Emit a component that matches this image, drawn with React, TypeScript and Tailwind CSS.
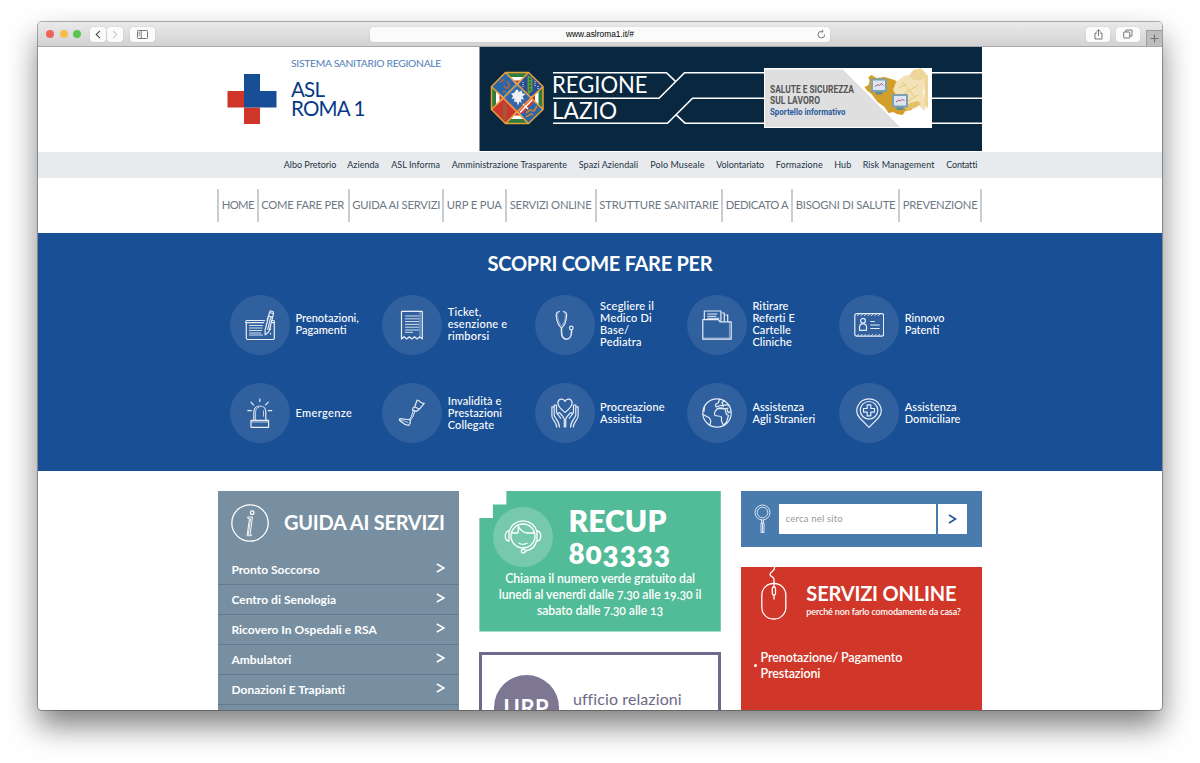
import React from "react";

type NavItem = { label: string; box: string; track: string };

const topLinks: NavItem[] = [
  { label: "Albo Pretorio", box: "w-[52px]", track: "tracking-[0px]" },
  { label: "Azienda", box: "w-[32.500px]", track: "tracking-[0.05px]" },
  { label: "ASL Informa", box: "w-[49px]", track: "tracking-[0.050px]" },
  { label: "Amministrazione Trasparente", box: "w-[115.5px]", track: "tracking-[0.04px]" },
  { label: "Spazi Aziendali", box: "w-[60px]", track: "tracking-[0.08px]" },
  { label: "Polo Museale", box: "w-[54.5px]", track: "tracking-[0.1px]" },
  { label: "Volontariato", box: "w-[48px]", track: "tracking-[-0.050px]" },
  { label: "Formazione", box: "w-[47px]", track: "tracking-[0.1px]" },
  { label: "Hub", box: "w-[17px]", track: "tracking-[0.1px]" },
  { label: "Risk Management", box: "w-[72px]", track: "tracking-[0.1px]" },
  { label: "Contatti", box: "w-[31px]", track: "tracking-[-0.15px]" },
];

const menu: NavItem[] = [
  { label: "HOME", box: "w-[39.5px]", track: "tracking-[-0.6px]" },
  { label: "COME FARE PER", box: "w-[91px]", track: "tracking-[-0.27px]" },
  { label: "GUIDA AI SERVIZI", box: "w-[94.5px]", track: "tracking-[-0.22px]" },
  { label: "URP E PUA", box: "w-[63px]", track: "tracking-[-0.15px]" },
  { label: "SERVIZI ONLINE", box: "w-[89.5px]", track: "tracking-[-0.2px]" },
  { label: "STRUTTURE SANITARIE", box: "w-[126.5px]", track: "tracking-[-0.12px]" },
  { label: "DEDICATO A", box: "w-[70px]", track: "tracking-[-0.4px]" },
  { label: "BISOGNI DI SALUTE", box: "w-[107px]", track: "tracking-[-0.22px]" },
  { label: "PREVENZIONE", box: "w-[83.500px]", track: "tracking-[-0.2px]" },
];

const icons: Record<string, React.ReactNode> = {
  booking: (
    <>
      <path d="M20 10.5H1.8a1 1 0 0 0-1 1v1.2h18.4M1.3 12.7V28a1.5 1.5 0 0 0 1.5 1.5h25A1.5 1.5 0 0 0 29.3 28V13M26 10.5h2.4a1 1 0 0 1 1 1v1.2H26" />
      <path d="M4 15.5h14M4 18h13.5M4 20.5h13M4 23h12M4 25h14" strokeWidth="0.9" />
      <path d="m20 20.5 4.5-18 4 1.2L24 21.5l-3.8 3.4-.2-4.4ZM24.5 2.5l.8-1.7 3 .9.2 2M23.5 6l3.9 1.1M22 11l1.4-5 2.5.8-3.3 13" />
      <path d="M25.5 16v5M25.5 23v2" strokeDasharray="1.5 1" />
    </>
  ),
  ticket: (
    <>
      <path d="M4.5 29V1.3h20.8V29l-2.6-2.2-2.6 2.2-2.6-2.2-2.6 2.2-2.6-2.2L9.700 29l-2.600-2.200Z" />
      <path d="M6.800 1.300h16.200v24.500" strokeWidth="0.6" />
      <path d="M8 6h14M8 8.800h14M8 11.600h14M8 14.400h14M8 17.200h14M8 20h14M8 22.300h8" strokeWidth="0.9" />
    </>
  ),
  stethoscope: (
    <>
      <path d="M10 1.500 8 2C6.200 2.500 6 4.200 6.300 6.500 6.800 11 8.300 15.500 11.500 18c3.200-2.500 4.700-7 5-11.500.3-2.300 0-4-1.800-4.500l-1.900-.5" />
      <path d="M8.500 3c-1 .6-1 2-.8 3.500.5 4 1.700 7.500 3.800 9.500 2.200-2 3.400-5.500 3.800-9.500.1-1.500 0-2.900-.9-3.500" strokeWidth="0.5" />
      <path d="M11.500 18v4.500c0 9 10 9 10-.500l-.1-2.200" strokeWidth="1.500" />
      <circle cx="21.300" cy="18" r="1.800" />
    </>
  ),
  folder: (
    <>
      <path d="M.8 29.200V9.700h15.700l1.500 2.100h11.200v17.400Z" />
      <path d="M27.400 12v15.800M1.500 28h27" strokeWidth="0.5" />
      <path d="M2.300 9.500V1h16.600v10.500M20 3h2.300v8.500M23.400 5h2.300v6.500" />
      <path d="M5.300 4h10M5.300 6.300h9M5.300 8.300h12" strokeWidth="1" />
    </>
  ),
  license: (
    <>
      <rect x=".8" y="3.600" width="28.800" height="22.600" rx="2" />
      <path d="m3 6 2-2m1.500 2 2-2M10 6l2-2m1.500 2 2-2M17 6l2-2m1.500 2 2-2M24 6l2-2M3 26l2-2m1.500 2 2-2M10 26l2-2m1.500 2 2-2M17 26l2-2m1.500 2 2-2M24 26l2-2" strokeWidth="0.800" />
      <circle cx="9" cy="10.800" r="2.400" />
      <path d="M5.500 20.300v-3.600c0-1.400 1-2.300 2.200-2.800h2.600c1.200.5 2.200 1.400 2.200 2.800v3.600ZM16.300 11.500h4.500M16.300 15h9.400M16.300 18.500h9.400" />
    </>
  ),
  siren: (
    <>
      <path d="M6 29.300v-7h17.600v7ZM8.800 22.300V14c0-8 12-8 12 0v8.300" />
      <path d="M10.600 22.300V14c0-3 1.500-4.500 3.500-4.700M18.500 12.500v6.200M6 24h17.600" strokeWidth=".8" />
      <path d="M14.800.5V4M5.700 3.800l3.200 3.500M23.500 3.800l-3.300 3.500M2.300 12.600h4.500M22.800 12.600h4.400" />
    </>
  ),
  prosthesis: (
    <>
      <path d="m20.200 2-2.500 6.800 4.500 2.500 5-6c-1.500.1-2.700-.2-3.600-1.200-.9-.9-1.900-1.800-3.400-2.100ZM17.700 8.800l-1.600 1-.6 2.300 3.800 1.300 2.900-2.100" />
      <path d="m16.300 12.500-2 6.300-2 2.900M18 13.100l-2.400 6.200-2.600 3.200" strokeWidth="1" />
      <path d="M12.300 21.500H10l-6.700-.8c-1.100.2-1.200 1.500-.4 2.100l5.200 3.600 3.500 1.100 1.500-2.200.2-2.800Z" />
      <path d="m3 22.300 5 .9 3.400 1.500" strokeWidth="0.700" />
    </>
  ),
  hands: (
    <>
      <path d="M15 14.500C11.500 11.700 7.900 9 7.900 5 7.900.5 13.500-.1 15 3.500 16.500-.1 22.100.5 22.100 5c0 4-3.600 6.700-7.100 9.500Z" />
      <path d="M14.300 29.500v-7.700c0-2-1-3.200-4.500-6.800-1-1-2.700.2-1.800 1.500l3 4.200M8 17l-1.500-2.500V7H4.200v10c0 3 5.300 5.500 5.300 12.500M4.200 8.800H1.900V18c0 4.500 4.900 5.600 4.900 11.500" />
      <path d="M15.700 29.500v-7.700c0-2 1-3.200 4.500-6.800 1-1 2.700.2 1.800 1.500l-3 4.200M22 17l1.500-2.500V7h2.300v10c0 3-5.300 5.500-5.300 12.500M25.800 8.800h2.300V18c0 4.500-4.900 5.600-4.900 11.500" />
    </>
  ),
  globe: (
    <>
      <circle cx="15" cy="15" r="14.200" />
      <path d="M1 16.500 7.500 20l1.300 3-1 4.200M2.500 9l-.6 5M17.500 1l-1 3.500-3 2 .5 2.500 5-1.700 2.500 1-1.500-3.800 3-2M27.500 8l-2.700-1.200-3 .3M15.500 10.500c2-1.300 4.500-.8 7.500.3l3.500-.8M23 10.800l1.500 5.700 2 1-2 6.700-3 3-2-4v-4c-1.500-1.700-4-.8-6.500-1.700-1.500-2 .5-5 2.500-7Z" />
      <path d="m25 11.200 1.300 3.600 2.700-1.600" />
    </>
  ),
  pin: (
    <>
      <path d="M15 29.400 5.800 20C-1.300 12 5.300.9 15 .9S31.300 12 24.200 20Z" />
      <circle cx="15" cy="12.300" r="8.800" />
      <path d="M13.200 6.800h3.600v3.700h3.700v3.600h-3.700v3.700h-3.600v-3.700H9.500v-3.600h3.700Z" />
    </>
  ),
};

const tiles = [
  { icon: "booking", lines: ["Prenotazioni,", "Pagamenti"], track: "tracking-[0px]" },
  { icon: "ticket", lines: ["Ticket,", "esenzione e", "rimborsi"], track: "tracking-[0.23px]" },
  { icon: "stethoscope", lines: ["Scegliere il", "Medico Di", "Base/", "Pediatra"], track: "tracking-[0.2px]" },
  { icon: "folder", lines: ["Ritirare", "Referti E", "Cartelle", "Cliniche"], track: "tracking-[0.1px]" },
  { icon: "license", lines: ["Rinnovo", "Patenti"], track: "tracking-[0px]" },
  { icon: "siren", lines: ["Emergenze"], track: "tracking-[0.38px]" },
  { icon: "prosthesis", lines: ["Invalidità e", "Prestazioni", "Collegate"], track: "tracking-[0.1px]" },
  { icon: "hands", lines: ["Procreazione", "Assistita"], track: "tracking-[0.14px]" },
  { icon: "globe", lines: ["Assistenza", "Agli Stranieri"], track: "tracking-[0.08px]" },
  { icon: "pin", lines: ["Assistenza", "Domiciliare"], track: "tracking-[0.1px]" },
];

const services = [
  "Pronto Soccorso",
  "Centro di Senologia",
  "Ricovero In Ospedali e RSA",
  "Ambulatori",
  "Donazioni E Trapianti",
];

function TitleBar() {
  const button = "flex h-[15px] items-center justify-center rounded-[3px] bg-[#fbfbfb] shadow-[0_0_1px_rgba(0,0,0,0.25)]";
  return (
    <div className="flex h-[25px] shrink-0 items-center border-b border-[#a9a9ab] bg-linear-to-b from-[#ebeaeb] to-[#d3d2d3] pl-[8px]">
      <div className="flex gap-[5.500px]">
        <span className="size-[8px] rounded-full bg-[#ee6259]" />
        <span className="size-[8px] rounded-full bg-[#f6bd4b]" />
        <span className="size-[8px] rounded-full bg-[#5ac452]" />
      </div>
      <div className="ml-[9px] flex gap-px">
        <span className={`${button} w-[16px]`}>
          <svg width="6" height="9" viewBox="0 0 6 9" fill="none" stroke="#4b4b4b" strokeWidth="1.1"><path d="M5 .8 1.200 4.500 5 8.200" /></svg>
        </span>
        <span className={`${button} w-[16px]`}>
          <svg width="6" height="9" viewBox="0 0 6 9" fill="none" stroke="#b0b0b0" strokeWidth="1"><path d="M1 .8 4.800 4.500 1 8.200" /></svg>
        </span>
      </div>
      <span className={`${button} ml-[7px] w-[25px]`}>
        <svg width="11" height="9" viewBox="0 0 11 9" fill="none" stroke="#6a6a6a" strokeWidth=".9"><rect x=".5" y=".5" width="10" height="8" rx=".8" /><path d="M4.200.5v8M1.700 2.200h1.200M1.700 3.700h1.200M1.700 5.200h1.200" /></svg>
      </span>
      <div className={`${button} relative ml-[215px] w-[460px]`}>
        <span className="pt-[1px] font-['Liberation_Sans',sans-serif] text-[8.400px] leading-none text-black">www.aslroma1.it/#</span>
        <svg className="absolute right-[4px] top-[3px]" width="9" height="9" viewBox="0 0 9 9" fill="none" stroke="#6a6a6a" strokeWidth=".9"><path d="M7.700 4.500a3.300 3.300 0 1 1-3.200-3.200h1.300M4.500-.2 6.200 1.300 4.500 2.900" /></svg>
      </div>
      <span className={`${button} ml-[256px] w-[24px]`}>
        <svg width="9" height="11" viewBox="0 0 9 11" fill="none" stroke="#6a6a6a" strokeWidth=".9"><path d="M3 4H1v6h7V4H6M4.500 7V.8M2.600 2.600 4.500.7l1.900 1.900" /></svg>
      </span>
      <span className={`${button} ml-[6px] w-[24px]`}>
        <svg width="10" height="10" viewBox="0 0 10 10" fill="none" stroke="#6a6a6a" strokeWidth=".9"><rect x=".7" y="3" width="6" height="6" rx=".5" /><path d="M3 3V1h6v6H6.800" /></svg>
      </span>
      <span className="ml-[5.500px] flex h-[16px] w-[16px] items-center justify-center self-end border-l border-t border-[#9c9c9e] bg-[#bdbdbf]">
        <svg width="9" height="9" viewBox="0 0 9 9" stroke="#707072" strokeWidth="1"><path d="M4.500.5v8M.5 4.500h8" /></svg>
      </span>
    </div>
  );
}

function RegionBanner() {
  return (
    <svg className="block" width="503" height="104" viewBox="479 47 503 104" fontFamily="Lato, sans-serif">
      <rect x="479.500" y="47" width="502.500" height="104" fill="#09273f" />
      <g fill="none" stroke="#fff" strokeWidth="1.600">
        <path d="M553 72.700h113.500l9 8.600M553 98.200h106l25.500-25.500H982M553 123.200h114.500l25-25H982M676 114.700l9 8.500H982" />
      </g>
      <g>
        <path d="M505.500 72.500h23l14.500 14v23l-14.500 14h-23l-14-14v-23Z" fill="#fff" />
        <path d="M505.500 72.500h23l-4.500 4.500h-14Z" fill="#2f7d3c" /><path d="M513.500 80.500h7.500l-3.800 4Z" fill="#c4302b" />
        <path d="M505.500 123.500h23l-4.500-4.500h-14Z" fill="#2f7d3c" /><path d="M513.500 115.500h7.500l-3.800-4Z" fill="#c4302b" />
        <path d="M491.500 86.500v23l4.500-4.500v-14Z" fill="#2f7d3c" /><path d="M499.500 94v8l4-4Z" fill="#c4302b" />
        <path d="M543 86.500v23l-4.500-4.500v-14Z" fill="#2f7d3c" /><path d="M535 94v8l-4-4Z" fill="#c4302b" />
        <path d="M505.500 72.500 491.500 86.500l13 11.500 12.700-12.500Z" fill="#2b66a8" />
        <path d="M528.500 72.500 543 86.500 529.700 98l-12.500-12.500Z" fill="#284d92" />
        <path d="M505.500 123.500l-14-14L504.500 98l12.700 12.500Z" fill="#cc372c" />
        <path d="M528.500 123.500l14.500-14L529.700 98l-12.500 12.500Z" fill="#2b66a8" />
        <path d="m517.200 85.500 12.500 12.500-12.500 12.500L504.500 98Z" fill="#3467a8" />
        <path d="m517.200 110.500 12.500-12.500 4.500 4-12.500 12.500Z" fill="#d63b32" /><path d="m520 112.500 12-12.500M523 104l5 5" stroke="#fff" strokeWidth="1.500" />
        <path d="m527.500 75 5 3v13l-5 4Z" fill="#5b9a43" /><path d="M530 78v13" stroke="#275e2c" strokeWidth="1.500" strokeDasharray="2 1.500" />
        <path d="M535 81v5m3 0v4M523 82v6" stroke="#fff" strokeDasharray="1 1" />
        <path d="m516 90 2-.5.5 2.500 3-1.500 1 3 3 .5-3 2.500 1.500 3-3-.5.5 4-2-1.500-1.500 4-1.500-4-2.500.5.5-3.500-3 .5 1.500-3-2-2.500 3-.5Z" fill="#eef0f5" />
        <path d="M500 83c1-3 4-1 3-4M504 86c3 4 6 2 5-2l-2-3M503 91l3 1" fill="none" stroke="#a8653a" strokeWidth="1.700" />
        <path d="m526 113 4-3 4 1 3-5M526 117l5-3 2 1" fill="none" stroke="#c48132" strokeWidth="1.800" />
        <path d="M503 103.500h3.500v15l-1.700 2-1.800-2Z" fill="#a7563a" /><path d="M504.700 105v12" stroke="#6c743d" strokeDasharray="1 1.500" strokeWidth="1.300" />
        <path d="M505.500 72.500h23l14.500 14v23l-14.500 14h-23l-14-14v-23ZM505.500 72.500l37.500 37M528.500 72.500l-37 37M491.500 86.500l37 37M543 86.500l-37.500 37" fill="none" stroke="#e8a03a" strokeWidth="1.500" />
      </g>
      <g fill="#fff" fontSize="22.500">
        <text x="552" y="92.800" textLength="95.500" lengthAdjust="spacingAndGlyphs">REGIONE</text>
        <text x="552" y="119.300" textLength="65" lengthAdjust="spacingAndGlyphs">LAZIO</text>
      </g>
      <rect x="764" y="68" width="168" height="60" fill="#fff" />
      <path d="M765 69.500h78l57 57.500H765Z" fill="#dfdfdf" />
      <path d="m864.500 87 4-2 1-4-1-4 3-2 5 3 8-1 7 2 5 2 3 7 6 5 2 9 6 4-2 4-6 1-3 4-6-1-3-2-5 1-4-6-7-5-6-8-4-3Z" fill="#d2a02a" />
      <path d="m896 82 8-6 8-2 1-4 8-2 5 5 2 8-3 2-2 10 4 12-3 6-7-8-8 4-5-8-7-3-4-6Z" fill="#f3e2b8" />
      <path d="M910 76c1-9 15-9 16 0l-4 4h-8Z" fill="#eed69a" /><path d="M924.500 75h3.500v33l-3.500-3Z" fill="#eed69a" />
      <path d="m902 82 12 14M904 94l14-9M908 101l10-6M899 88l8-4" stroke="#e6c877" strokeWidth="1" fill="none" />
      <path d="m904 107 6-4 8-2 3 3-6 4-8 2Z" fill="#e3c167" />
      {[[871, 78.500], [892, 94]].map(([x, y]) => (
        <g key={x}>
          <path d={`M${x + 4} ${y + 13}h8l-1 3h-6Z`} fill="#5f8a9a" />
          <rect x={x} y={y} width="16" height="13.500" rx="1" fill="#7e9fb0" />
          <rect x={x + 2} y={y + 2} width="12" height="9.500" fill="#dce6f3" />
          <path d={`m${x + 4} ${y + 8} 3-2 1.500 1 2-2 2 2`} fill="none" stroke="#c04d63" strokeWidth="1" />
        </g>
      ))}
      <g fontFamily="Roboto, sans-serif" fontWeight="700" fontSize="10">
        <text x="770" y="93" fill="#555" textLength="84" lengthAdjust="spacingAndGlyphs">SALUTE E SICUREZZA</text>
        <text x="770" y="104" fill="#555" textLength="50" lengthAdjust="spacingAndGlyphs">SUL LAVORO</text>
        <text x="770" y="115" fontSize="9.500" fill="#2a5c9c" textLength="75.500" lengthAdjust="spacingAndGlyphs">Sportello informativo</text>
      </g>
    </svg>
  );
}

function Header() {
  return (
    <header className="flex h-[104.500px] shrink-0 pl-[189px]">
      <svg className="mt-[27px] shrink-0" width="50" height="50" viewBox="0 0 50 50">
        <path d="M.5 17H17v16.500H.5ZM17 33.500h16V50H17Z" fill="#d03628" />
        <path d="M17 0h16v17h16.500v16.500H17Z" fill="#174e95" />
      </svg>
      <div className="ml-[14px] w-[188px] whitespace-nowrap pt-[10px]">
        <p className="text-[10.300px] leading-[13px] tracking-[-0.280px] text-[#4f7db9]">SISTEMA SANITARIO REGIONALE</p>
        <p className="mt-[10px] text-[20.500px] leading-[19px] tracking-[-0.800px] text-[#063a86]">ASL<br />ROMA 1</p>
      </div>
      <RegionBanner />
    </header>
  );
}

function Hero() {
  return (
    <section className="flex h-[237.500px] shrink-0 flex-col bg-[#194f95] pl-[192px] text-white">
      <h2 className="-ml-[192px] mt-[18px] text-center text-[20px] font-bold leading-[24px] tracking-[-0.280px]">SCOPRI COME FARE PER</h2>
      <div className="mt-[19.500px] grid grid-cols-[repeat(5,152.300px)] gap-y-[28.500px]">
        {tiles.map((t) => (
          <div key={t.icon} className="flex h-[60px] items-center">
            <span className="flex size-[60px] shrink-0 items-center justify-center rounded-full bg-[#31609e]">
              <svg width="30" height="30" viewBox="0 0 30 30" fill="none" stroke="#e6edf6" strokeWidth="1.200" strokeLinejoin="round">{icons[t.icon]}</svg>
            </span>
            <p className={`${t.track} -mt-px ml-[5.500px] whitespace-nowrap text-[11px] font-medium leading-[12px]`}>
              {t.lines.map((l) => (
                <span key={l} className="block">{l}</span>
              ))}
            </p>
          </div>
        ))}
      </div>
    </section>
  );
}

function ServiceGuide() {
  return (
    <section className="h-[230px] w-[241px] bg-[#788fa2] text-white">
      <div className="flex h-[63.500px] items-center pl-[13px]">
        <svg width="38" height="38" viewBox="0 0 38 38" fill="none" stroke="#fff" strokeWidth="1.300">
          <circle cx="19" cy="19" r="18.200" />
          <circle cx="21.200" cy="8.700" r="1.800" />
          <path d="M16.700 13h4.800l-2.400 17.200 1.300.4v1.100h-4.400l2.500-17-1.800-.6ZM19.600 14.500 17.200 31" strokeWidth="0.900" />
        </svg>
        <h3 className="-mt-[2px] ml-[14.800px] whitespace-nowrap text-[20px] font-bold leading-[24px] tracking-[-0.270px]">GUIDA AI SERVIZI</h3>
      </div>
      {services.map((s) => (
        <div key={s} className="flex h-[30.150px] items-center justify-between border-b border-[#63798d] pl-[13.200px] pr-[14px] text-[12px] font-bold">
          <span className="whitespace-nowrap pt-px tracking-[0.030px]">{s}</span>
          <svg className="-mt-[3px]" width="9" height="10" viewBox="0 0 9 10" fill="none" stroke="#fff" strokeWidth="1.600"><path d="m.8 1 7.200 4L.8 9" /></svg>
        </div>
      ))}
    </section>
  );
}

function Recup() {
  return (
    <section className="h-[140.500px] w-[241.400px] bg-[#52bb97] text-white [clip-path:polygon(27px_0,100%_0,100%_100%,0_100%,0_27px,13.5px_27px,13.5px_13.5px,27px_13.5px)]">
      <div className="flex h-[79.500px] pl-[13.500px]">
        <span className="mt-[16px] flex size-[60px] items-center justify-center rounded-full bg-[#76c9ad]">
          <svg width="38" height="34" viewBox="0 0 38 34" fill="none" stroke="#fff" strokeWidth="1.300">
            <circle cx="19" cy="16" r="12" />
            <path d="M5 12.500C8-3 30-3 33 12.500M5 11c-5 0-5 10 0 10ZM33 11c5 0 5 10 0 10ZM7 13h6.500c1.500-2 1-5 .5-7.500 2 4.500 5 7 9 7.500h8M14.500 23c2.500 1.500 6.500 1.500 9 0M32.500 21c-1 5-5 9-11 10" />
            <circle cx="19.300" cy="31" r="1.900" />
          </svg>
        </span>
        <h3 className="ml-[15.500px] pt-[13px] text-[30px] font-extrabold leading-[32px] [font-feature-settings:'onum']">
          <span className="block tracking-[0.100px]">RECUP</span>
          <span className="block tracking-[0.900px]">803333</span>
        </h3>
      </div>
      <p className="whitespace-nowrap text-center text-[12.300px] font-semibold leading-[16px] tracking-[-0.100px] [font-feature-settings:'onum']">
        Chiama il numero verde gratuito dal<br />lunedì al venerdì dalle 7.30 alle 19.30 il<br />sabato dalle 7.30 alle 13
      </p>
    </section>
  );
}

function PublicRelations() {
  return (
    <section className="mt-[20.500px] flex h-[120px] w-[241.400px] border-[3px] border-b-0 border-[#706a8d] pl-[11.500px] pt-[20px]">
      <span className="flex size-[65px] shrink-0 justify-center rounded-full bg-[#7d7794] pt-[20px] text-[22px] font-bold leading-[26px] tracking-[0.500px] text-white">URP</span>
      <p className="ml-[14px] whitespace-nowrap pt-[13.500px] text-[16px] leading-[20px] tracking-[0.100px] text-[#6e6888]">ufficio relazioni</p>
    </section>
  );
}

function Search() {
  return (
    <section className="flex h-[55.500px] w-[241px] bg-[#4a7bae] pl-[13px] pt-[13px]">
      <svg width="17" height="30" viewBox="0 0 17 30" fill="none" stroke="#dce7f2" strokeWidth="1">
        <circle cx="8.500" cy="8.500" r="7.500" /><circle cx="8.500" cy="8.500" r="5.300" />
        <path d="M7.500 16v3h2v-3M7 19h3v9.500H7ZM8.500 19.500v8.500" />
      </svg>
      <div className="ml-[8.500px] flex h-[29.500px] w-[157px] items-center bg-white pl-[6.500px] text-[9.500px] tracking-[0.200px] text-[#999]">cerca nel sito</div>
      <div className="ml-[2px] flex h-[29.500px] w-[29px] items-center justify-center bg-white">
        <svg width="9" height="10" viewBox="0 0 9 10" fill="none" stroke="#1f5797" strokeWidth="1.600"><path d="m1 1 6.500 4L1 9" /></svg>
      </div>
    </section>
  );
}

function OnlineServices() {
  return (
    <section className="mt-[20px] h-[160px] w-[241px] bg-[#d03729] text-white">
      <div className="flex h-[83px] pl-[20px]">
        <svg width="26" height="54" viewBox="0 0 26 54" fill="none" stroke="#fff" strokeWidth="1.300">
          <path d="M13.500 0c1 4-4.500 4.500-4.500 7.500 0 2.500 4.500 2 4 5.500v7" />
          <rect x=".8" y="16.500" width="24" height="35.500" rx="11.500" />
          <rect x="11.300" y="20" width="3.200" height="8" rx="1.600" /><path d="M13 28v4.500" />
        </svg>
        <div className="ml-[19.800px] whitespace-nowrap pt-[14px]">
          <h3 className="text-[20px] font-bold leading-[24px] tracking-[-0.180px]">SERVIZI ONLINE</h3>
          <p className="mt-px text-[9px] font-semibold leading-[11px] tracking-[-0.140px]">perché non farlo comodamente da casa?</p>
        </div>
      </div>
      <div className="flex items-center pl-[13.500px]">
        <span className="size-[2.500px] rounded-full bg-white" />
        <p className="ml-[4px] whitespace-nowrap text-[12.500px] font-semibold leading-[16px] tracking-[-0.100px]">Prenotazione/ Pagamento<br />Prestazioni</p>
      </div>
    </section>
  );
}

export default function App() {
  return (
    <div className="h-[763px] w-[1200px] overflow-hidden bg-white pl-[38px] pt-[22px] font-['Lato',sans-serif]">
      <div className="flex h-[688px] w-[1124px] flex-col overflow-hidden rounded-[4px] bg-white shadow-[0_0_0_1px_rgba(0,0,0,0.3),0_16px_30px_rgba(0,0,0,0.5)]">
        <TitleBar />
        <Header />
        <nav className="flex h-[26.500px] shrink-0 items-center gap-[11.500px] whitespace-nowrap bg-[#e7ebee] pl-[245.700px] text-[9px] text-[#1f3244]">
          {topLinks.map((l) => (
            <a key={l.label} className={`${l.box} ${l.track}`}>{l.label}</a>
          ))}
        </nav>
        <nav className="flex h-[55px] shrink-0 items-center whitespace-nowrap pl-[179.200px] text-[11.250px] text-[#6d7985]">
          {menu.map((m) => (
            <a key={m.label} className={`${m.box} ${m.track} flex h-[33px] items-center border-l-2 border-[#c8cdd1] pl-[2.500px] last:border-r-2`}>{m.label}</a>
          ))}
        </nav>
        <Hero />
        <main className="flex shrink-0 gap-[20.200px] pl-[180.200px] pt-[20.500px]">
          <ServiceGuide />
          <div className="w-[241px]">
            <Recup />
            <PublicRelations />
          </div>
          <div>
            <Search />
            <OnlineServices />
          </div>
        </main>
      </div>
    </div>
  );
}
